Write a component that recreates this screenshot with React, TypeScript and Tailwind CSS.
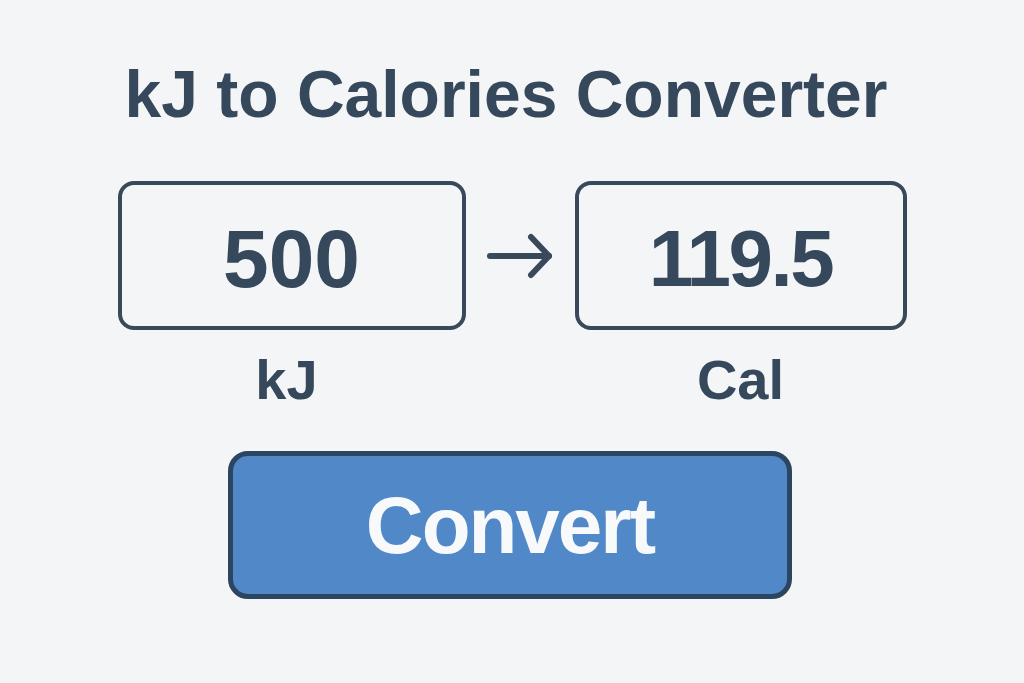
export default function App() {
    return (
        <div className="min-h-screen w-full bg-[#f4f5f6] text-[#36485b] flex flex-col items-center font-['Liberation_Sans',Arial,sans-serif]">
            <h1 className="pt-[61px] mr-[12px] text-[66px] leading-none font-bold">kJ to Calories Converter</h1>

            <div className="mt-[54px] grid grid-cols-[348px_69px_332px] gap-x-[20px] gap-y-[22px] items-center">
                <div className="h-[149px] flex items-center justify-center rounded-[16px] border-[4px] border-[#38495b] pt-[6px]">
                    <span className="text-[82px] leading-none font-bold">500</span>
                </div>
                <svg width="69" height="48" viewBox="0 0 69 48" fill="none" stroke="#38495b" strokeWidth="6" strokeLinecap="round" strokeLinejoin="round">
                    <path d="M4 24H63"/>
                    <path d="M45 5L63 24L45 43"/>
                </svg>
                <div className="h-[149px] flex items-center justify-center rounded-[16px] border-[4px] border-[#38495b] pt-[6px]">
                    <span className="text-[80px] leading-none font-bold tracking-[-2.5px]">119.5</span>
                </div>

                <div className="text-center text-[56px] leading-none font-bold pr-[10px]">kJ</div>
                <div/>
                <div className="text-center text-[56px] leading-none font-bold">Cal</div>
            </div>

            <button className="mt-[43px] mr-[4px] w-[564px] h-[148px] flex items-center justify-center rounded-[20px] border-[5px] border-[#2c4560] bg-[#5088c8] text-[#f7f9fb] text-[80px] leading-none font-bold tracking-[-2px] pt-[2px]">
                Convert
            </button>
        </div>
    )
}
